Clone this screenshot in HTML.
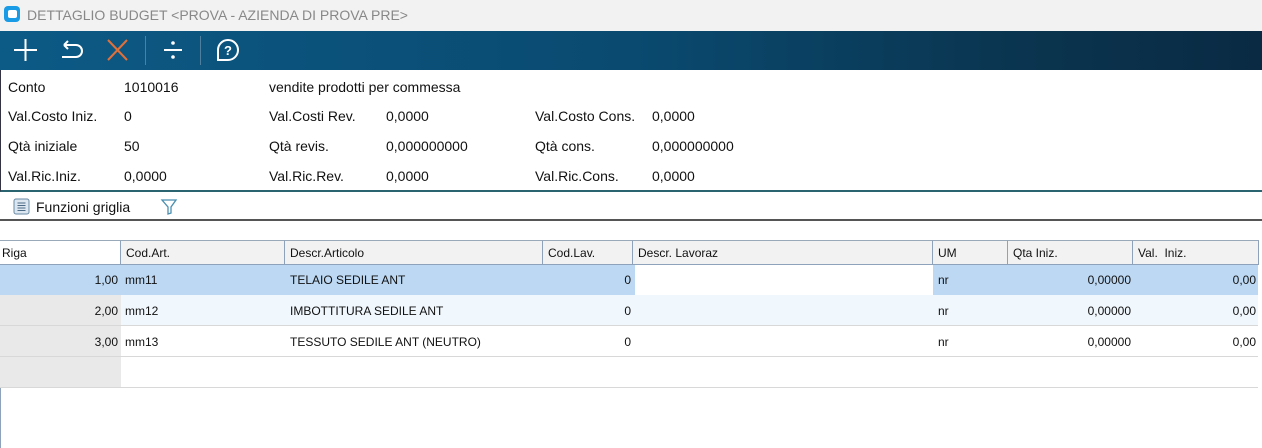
<!DOCTYPE html>
<html><head><meta charset="utf-8"><style>
*{margin:0;padding:0;box-sizing:border-box}
body{width:1262px;height:448px;overflow:hidden;background:#fff;font-family:"Liberation Sans",sans-serif;position:relative}
.abs{position:absolute;white-space:nowrap}
#title{left:0;top:0;width:1262px;height:31px;background:#f2f2f2}
#tb{left:0;top:31px;width:1262px;height:39px;background:linear-gradient(90deg,#0c5a86 0%,#0a4a70 50%,#0a3550 80%,#0a2a43 100%)}
#form{left:0;top:70px;width:1262px;height:122px;border-left:1px solid #334;border-bottom:2px solid #2a6470}
.f{font-size:14px;color:#111}
.g{font-size:12px;color:#111}
.hd{position:absolute;top:240px;height:25px;background:#f2f2f2;border-top:1px solid #9aa9ba;border-bottom:1px solid #8ea3bb;border-right:1px solid #8ea3bb;font-size:12px;padding:5px 0 0 5px;color:#111}
.row{position:absolute;left:0;width:1258px;height:31px;border-bottom:1px solid #d8d8d8}
</style></head><body>
<div id="title" class="abs">
 <div class="abs" style="left:4px;top:6px;width:16px;height:16px;background:#1a9be6;border-radius:4px"></div>
 <div class="abs" style="left:8px;top:10px;width:9px;height:8px;background:#fff;border-radius:2px"></div>
 <div class="abs" style="left:27px;top:7px;font-size:14px;color:#888">DETTAGLIO BUDGET &lt;PROVA - AZIENDA DI PROVA PRE&gt;</div>
</div>
<div id="tb" class="abs">
<svg width="260" height="39" style="position:absolute;left:0;top:0">
 <g stroke="#fff" stroke-width="2" fill="none">
  <path d="M14 19H37M25.5 8V30"/>
  <path d="M64 14H76a6 6 0 0 1 0 12H62M64 14l4-4M64 14l4 4"/>
 </g>
 <path d="M108 9L127 29M127 9L108 29" stroke="#e0703a" stroke-width="2"/>
 <line x1="145.5" y1="5" x2="145.5" y2="34" stroke="#4f7f9e"/>
 <line x1="200.5" y1="5" x2="200.5" y2="34" stroke="#4f7f9e"/>
 <path d="M164 19H182" stroke="#fff" stroke-width="2"/>
 <circle cx="173" cy="12" r="1.8" fill="#fff"/><circle cx="173" cy="26" r="1.8" fill="#fff"/>
 <path d="M218 29V19a10 10 0 1 1 10 10Z" stroke="#fff" stroke-width="2" fill="none"/>
 <text x="228" y="24" font-size="13" font-weight="bold" fill="#fff" text-anchor="middle" font-family="Liberation Sans">?</text>
</svg>
</div>
<div id="form" class="abs"></div>
<div class="abs f" style="left:8px;top:79px">Conto</div>
<div class="abs f" style="left:124px;top:79px">1010016</div>
<div class="abs f" style="left:269px;top:79px">vendite prodotti per commessa</div>
<div class="abs f" style="left:8px;top:108px">Val.Costo Iniz.</div>
<div class="abs f" style="left:124px;top:108px">0</div>
<div class="abs f" style="left:269px;top:108px">Val.Costi Rev.</div>
<div class="abs f" style="left:386px;top:108px">0,0000</div>
<div class="abs f" style="left:535px;top:108px">Val.Costo Cons.</div>
<div class="abs f" style="left:652px;top:108px">0,0000</div>
<div class="abs f" style="left:8px;top:138px">Qtà iniziale</div>
<div class="abs f" style="left:124px;top:138px">50</div>
<div class="abs f" style="left:269px;top:138px">Qtà revis.</div>
<div class="abs f" style="left:386px;top:138px">0,000000000</div>
<div class="abs f" style="left:535px;top:138px">Qtà cons.</div>
<div class="abs f" style="left:652px;top:138px">0,000000000</div>
<div class="abs f" style="left:8px;top:168px">Val.Ric.Iniz.</div>
<div class="abs f" style="left:124px;top:168px">0,0000</div>
<div class="abs f" style="left:269px;top:168px">Val.Ric.Rev.</div>
<div class="abs f" style="left:386px;top:168px">0,0000</div>
<div class="abs f" style="left:535px;top:168px">Val.Ric.Cons.</div>
<div class="abs f" style="left:652px;top:168px">0,0000</div>

<svg class="abs" style="left:13px;top:198px" width="18" height="18"><rect x="1" y="1" width="15" height="15" rx="2" fill="#dbe6f0" stroke="#6a8aa6"/><path d="M4.5 5H12.5M4.5 7.5H12.5M4.5 10H12.5M4.5 12.5H12.5" stroke="#4b6a86"/></svg>
<div class="abs f" style="left:36px;top:199px">Funzioni griglia</div>
<svg class="abs" style="left:160px;top:197px" width="18" height="20"><path d="M2 3H16L11 10V16L8 17V10Z" fill="none" stroke="#4a8eb0" stroke-width="1.3"/></svg>
<div class="abs" style="left:0;top:219px;width:1262px;height:2px;background:#555"></div>

<div class="abs" style="left:0;top:240px;width:1px;height:208px;background:#8ea3bb"></div>
<div class="hd" style="left:0;width:121px;background:#fff;padding-left:2px">Riga</div>
<div class="hd" style="left:121px;width:164px">Cod.Art.</div>
<div class="hd" style="left:285px;width:258px">Descr.Articolo</div>
<div class="hd" style="left:543px;width:90px">Cod.Lav.</div>
<div class="hd" style="left:633px;width:300px">Descr. Lavoraz</div>
<div class="hd" style="left:933px;width:75px">UM</div>
<div class="hd" style="left:1008px;width:125px">Qta Iniz.</div>
<div class="hd" style="left:1133px;width:126px">Val.&nbsp; Iniz.</div>

<div class="row" style="top:265px;background:#bcd8f3;border-bottom:none;height:30px">
 <div class="abs" style="left:635px;top:0;width:298px;height:30px;background:#fff"></div>
</div>
<div class="row" style="top:295px;background:#f0f7fd"><div class="abs" style="left:0;top:0;width:121px;height:30px;background:#e9e9e9"></div></div>
<div class="row" style="top:326px"><div class="abs" style="left:0;top:0;width:121px;height:30px;background:#e9e9e9"></div></div>
<div class="row" style="top:357px"><div class="abs" style="left:0;top:0;width:121px;height:30px;background:#e9e9e9"></div></div>

<div class="abs g" style="right:1144px;top:273px">1,00</div>
<div class="abs g" style="left:125px;top:273px">mm11</div>
<div class="abs g" style="left:290px;top:273px">TELAIO SEDILE ANT</div>
<div class="abs g" style="right:631px;top:273px">0</div>
<div class="abs g" style="left:938px;top:273px">nr</div>
<div class="abs g" style="right:131px;top:273px">0,00000</div>
<div class="abs g" style="right:6px;top:273px">0,00</div>

<div class="abs g" style="right:1144px;top:304px">2,00</div>
<div class="abs g" style="left:125px;top:304px">mm12</div>
<div class="abs g" style="left:290px;top:304px">IMBOTTITURA SEDILE ANT</div>
<div class="abs g" style="right:631px;top:304px">0</div>
<div class="abs g" style="left:938px;top:304px">nr</div>
<div class="abs g" style="right:131px;top:304px">0,00000</div>
<div class="abs g" style="right:6px;top:304px">0,00</div>

<div class="abs g" style="right:1144px;top:335px">3,00</div>
<div class="abs g" style="left:125px;top:335px">mm13</div>
<div class="abs g" style="left:290px;top:335px">TESSUTO SEDILE ANT (NEUTRO)</div>
<div class="abs g" style="right:631px;top:335px">0</div>
<div class="abs g" style="left:938px;top:335px">nr</div>
<div class="abs g" style="right:131px;top:335px">0,00000</div>
<div class="abs g" style="right:6px;top:335px">0,00</div>
</body></html>
